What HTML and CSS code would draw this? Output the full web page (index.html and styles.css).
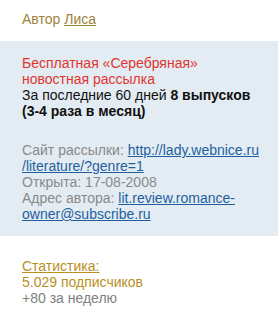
FILE: index.html
```html
<!DOCTYPE html>
<html lang="ru">
<head>
<meta charset="utf-8">
<link rel="stylesheet" href="styles.css">
</head>
<body>
<div class="author">Автор <a href="#" class="author-link">Лиса</a></div>
<div class="panel">
  <div class="block">
    <div class="red">Бесплатная «Серебряная» новостная рассылка</div>
    <div class="dark">За последние 60 дней <b>8 выпусков (3-4 раза в месяц)</b></div>
  </div>
  <div class="block info">
    <div>Сайт рассылки: <a href="#" class="blue">http://lady.webnice.ru<br>/literature/?genre=1</a></div>
    <div>Открыта: 17-08-2008</div>
    <div>Адрес автора: <a href="#" class="blue">lit.review.romance-owner@subscribe.ru</a></div>
  </div>
</div>
<div class="stats">
  <a href="#" class="stats-link">Статистика:</a>
  <div class="subs">5.029 подписчиков</div>
  <div class="week">+80 за неделю</div>
</div>
</body>
</html>
```
FILE: styles.css
```css
html, body {
  margin: 0;
  padding: 0;
  background: #ffffff;
}
body {
  font-family: "Liberation Sans", Arial, sans-serif;
  font-size: 14px;
  line-height: 16px;
  width: 278px;
}
.author {
  padding: 11px 12px 0 22px;
  height: 30px;
  color: #a0823a;
}
.author-link {
  color: #a0823a;
  text-decoration: underline;
}
.panel {
  background: #e3ecf3;
  padding: 14px 12px 14px 22px;
  display: flex;
  flex-direction: column;
  gap: 23px;
}
.red {
  color: #e0352f;
}
.dark {
  color: #111111;
}
.dark b {
  font-weight: bold;
}
.info {
  color: #8a8a8a;
}
.blue {
  color: #1f5f9f;
  text-decoration: underline;
}
.stats {
  padding: 22px 12px 0 22px;
  display: flex;
  flex-direction: column;
}
.stats-link {
  color: #b8901e;
  text-decoration: underline;
}
.subs {
  color: #b8901e;
}
.week {
  color: #808080;
}
```
